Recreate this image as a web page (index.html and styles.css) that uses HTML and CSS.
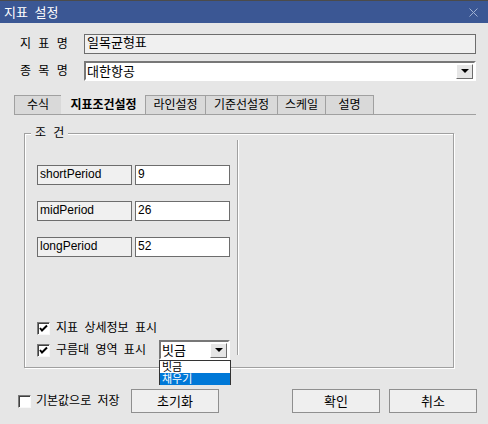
FILE: index.html
```html
<!DOCTYPE html>
<html lang="ko">

<head>
    <meta charset="UTF-8">
    <title>지표 설정</title>
    <link rel="stylesheet" href="styles.css">
</head>

<body>
    <div class="titlebar">
        <span class="title">지표 설정</span>
        <svg class="close" width="9" height="9" viewBox="0 0 9 9">
            <path d="M0.5 0.5 L8.5 8.5 M8.5 0.5 L0.5 8.5" stroke="#9fb0d2" stroke-width="1" fill="none"/>
        </svg>
    </div>

    <div class="field-row first">
        <span class="field-label">지 표 명</span>
        <div class="readonly">일목균형표</div>
    </div>
    <div class="field-row">
        <span class="field-label">종 목 명</span>
        <div class="combo">
            <span>대한항공</span>
            <span class="combo-btn"><i class="arrow"></i></span>
        </div>
    </div>

    <ul class="tabs">
        <li>수식</li>
        <li class="active">지표조건설정</li>
        <li>라인설정</li>
        <li>기준선설정</li>
        <li>스케일</li>
        <li>설명</li>
    </ul>

    <div class="group">
        <span class="legend">조 건</span>
        <div class="group-inner">
            <div class="params">
                <div class="param-row">
                    <div class="param-name">shortPeriod</div>
                    <div class="param-value">9</div>
                </div>
                <div class="param-row">
                    <div class="param-name">midPeriod</div>
                    <div class="param-value">26</div>
                </div>
                <div class="param-row">
                    <div class="param-name">longPeriod</div>
                    <div class="param-value">52</div>
                </div>

                <div class="checks">
                    <div class="check-row">
                        <label class="check"><span class="box checked"></span>지표 상세정보 표시</label>
                    </div>
                    <div class="check-row">
                        <label class="check"><span class="box checked"></span>구름대 영역 표시</label>
                        <div class="mini-combo">
                            <span>빗금</span>
                            <span class="combo-btn"><i class="arrow"></i></span>
                            <ul class="dropdown">
                                <li>빗금</li>
                                <li class="selected">채우기</li>
                            </ul>
                        </div>
                    </div>
                </div>
            </div>
            <div class="divider"></div>
        </div>
    </div>

    <div class="footer">
        <label class="check save"><span class="box"></span>기본값으로 저장</label>
        <button class="btn">초기화</button>
        <button class="btn ok">확인</button>
        <button class="btn">취소</button>
    </div>
</body>

</html>
```

FILE: styles.css
```css
* {
    margin: 0;
    padding: 0;
    list-style-type: none;
    box-sizing: border-box;
}

body {
    width: 488px;
    height: 424px;
    overflow: hidden;
    background: #e6e6e6;
    color: #000;
    font: 12px/1 "Liberation Sans", "Noto Sans CJK KR", sans-serif;
    word-spacing: 3px;
}

/* 타이틀 */
.titlebar {
    height: 23px;
    border-top: 1px solid #4b4b4b;
    background: #3b5794;
    color: #fff;
    display: flex;
    align-items: center;
    justify-content: space-between;
    padding: 0 10px 0 4px;
}

.title {
    font-size: 13px;
}

/* 지표명 / 종목명 */
.field-row {
    display: flex;
    align-items: center;
    height: 20px;
    margin: 7px 12px 0 20px;
}

.field-row.first {
    margin-top: 11px;
}

.field-label {
    width: 64px;
    word-spacing: 4px;
}

.readonly {
    flex: 1;
    height: 20px;
    border: 1px solid #6d6d6d;
    background: #f0f0f0;
    padding: 1px 2px;
    font-size: 13px;
}

.combo {
    flex: 1;
    height: 20px;
    display: flex;
    align-items: center;
    justify-content: space-between;
    border: 2px solid;
    border-color: #777 #fff #fff #777;
    background: #fff;
    padding: 0 1px 0 1px;
    font-size: 13px;
}

.combo-btn {
    width: 17px;
    height: 15px;
    display: flex;
    align-items: center;
    justify-content: center;
    background: #e6e6e6;
    border: 1px solid;
    border-color: #fff #6d6d6d #6d6d6d #fff;
}

.arrow {
    width: 0;
    height: 0;
    border-left: 4px solid transparent;
    border-right: 4px solid transparent;
    border-top: 4px solid #000;
}

/* 탭 */
.tabs {
    display: flex;
    width: 462px;
    margin: 14px 0 0 14px;
    border-bottom: 1px solid #a0a0a0;
}

.tabs li {
    height: 19px;
    line-height: 18px;
    text-align: center;
    background: #d9d9d9;
    border: 1px solid #a0a0a0;
    border-bottom: none;
    margin-right: -1px;
}

.tabs li.active {
    background: #e6e6e6;
    border-color: transparent;
    font-weight: bold;
}

.tabs li:nth-child(1) { width: 48px; }
.tabs li:nth-child(2) { width: 85px; }
.tabs li:nth-child(3) { width: 61px; }
.tabs li:nth-child(4) { width: 73px; }
.tabs li:nth-child(5) { width: 49px; }
.tabs li:nth-child(6) { width: 49px; }

/* 조건 그룹 */
.group {
    position: relative;
    width: 430px;
    height: 235px;
    margin: 18px 0 0 24px;
    border: 1px solid #a0a0a0;
    box-shadow: inset 1px 1px 0 #fff, 1px 1px 0 #fff;
}

.legend {
    position: absolute;
    top: -7px;
    left: 6px;
    padding: 0 4px;
    background: #e6e6e6;
    word-spacing: 4px;
}

.group-inner {
    display: flex;
    height: 100%;
}

.params {
    width: 212px;
    display: flex;
    flex-direction: column;
    gap: 16px;
    padding: 31px 7px 7px 12px;
}

.param-row {
    display: flex;
    gap: 3px;
}

.param-name,
.param-value {
    width: 95px;
    height: 20px;
    border: 1px solid #6d6d6d;
    padding: 2px 2px;
}

.param-name {
    background: #f0f0f0;
}

.param-value {
    background: #fff;
}

.divider {
    width: 2px;
    margin: 6px 0 12px;
    border-left: 1px solid #a0a0a0;
    border-right: 1px solid #fff;
}

.checks {
    margin-top: auto;
    display: flex;
    flex-direction: column;
    gap: 2px;
}

.check-row {
    height: 20px;
    display: flex;
    align-items: center;
    justify-content: space-between;
}

.check {
    display: flex;
    align-items: center;
    gap: 6px;
}

.box {
    width: 13px;
    height: 13px;
    background: #fff;
    border: 1px solid;
    border-color: #7a7a7a #f8f8f8 #f8f8f8 #7a7a7a;
    box-shadow: inset 1px 1px 0 #404040;
}

.box.checked {
    background: #fff url("data:image/svg+xml,%3Csvg xmlns='http://www.w3.org/2000/svg' width='11' height='11'%3E%3Cpath d='M2 5 L4 7.5 L9 2.5' stroke='%23000' stroke-width='2' fill='none'/%3E%3C/svg%3E") no-repeat center;
}

.mini-combo {
    position: relative;
    width: 71px;
    height: 20px;
    display: flex;
    align-items: center;
    justify-content: space-between;
    border: 2px solid;
    border-color: #777 #fff #fff #777;
    background: #fff;
    padding: 0 1px;
    font-size: 13px;
}

.dropdown {
    position: absolute;
    top: 18px;
    left: -2px;
    width: 72px;
    height: 25px;
    border: 1px solid #333;
    background: #fff;
    z-index: 2;
}

.dropdown li {
    height: 12px;
    line-height: 12px;
    font-size: 11px;
    padding-left: 2px;
    overflow: hidden;
}

.dropdown li.selected {
    background: #0078d7;
    color: #fff;
}

/* 하단 */
.footer {
    display: flex;
    align-items: center;
    height: 24px;
    margin-top: 21px;
    padding: 0 11px 0 18px;
}

.save {
    width: 113px;
    gap: 5px;
}

.btn {
    width: 88px;
    height: 24px;
    border: 1px solid #8f8f8f;
    background: #efefef;
    font: inherit;
    font-size: 13px;
}

.btn.ok {
    margin-left: auto;
    margin-right: 9px;
}
```
